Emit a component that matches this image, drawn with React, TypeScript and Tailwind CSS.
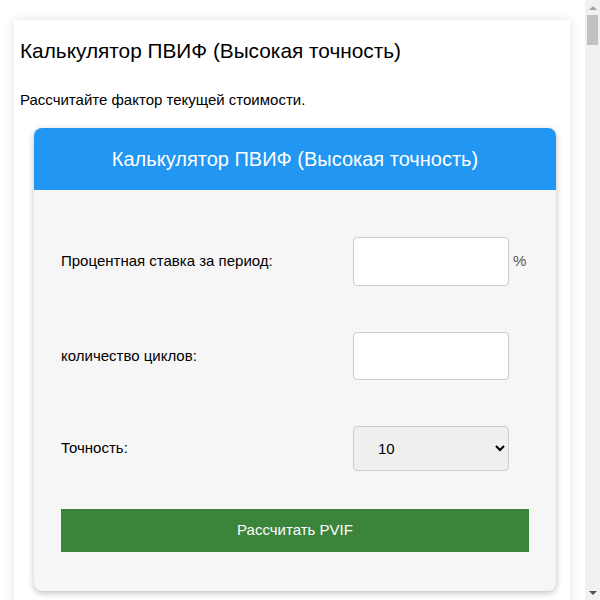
import { useState } from "react"

export default function App() {
  const [rate, setRate] = useState("")
  const [periods, setPeriods] = useState("")
  const [precision, setPrecision] = useState("10")

  return (
    <div className="flex h-screen overflow-hidden bg-white font-['Liberation_Sans',Arial,sans-serif] text-black">
      <div className="min-w-0 flex-1">
        <div className="ml-[14px] mt-[20px] w-[556px] bg-white px-[6px] pt-[19px] shadow-[0_0_10px_rgba(0,0,0,0.12)]">
          <h1 className="text-[20.8px] leading-[24px]">Калькулятор ПВИФ (Высокая точность)</h1>
          <p className="mt-[28px] text-[15px] leading-[17px]">Рассчитайте фактор текущей стоимости.</p>

          <div className="ml-[14px] mr-[8px] mt-[20px] overflow-hidden rounded-lg bg-[#f6f6f6] shadow-[0_2px_6px_rgba(0,0,0,0.25)]">
            <div className="flex h-[62px] items-center justify-center bg-[#2196f3] text-[20px] text-white">
              Калькулятор ПВИФ (Высокая точность)
            </div>

            <div className="px-[27px] pb-[39px] pt-[47px]">
              <div className="flex items-center">
                <label className="w-[292px] shrink-0 text-[15px]">Процентная ставка за период:</label>
                <input
                  value={rate}
                  onChange={(e) => setRate(e.target.value)}
                  className="h-[49px] w-[156px] shrink-0 rounded border border-[#cccccc] bg-white px-3 text-[15px] outline-none"
                />
                <span className="ml-[4px] text-[15px] text-[#555555]">%</span>
              </div>

              <div className="mt-[46px] flex items-center">
                <label className="w-[292px] shrink-0 text-[15px]">количество циклов:</label>
                <input
                  value={periods}
                  onChange={(e) => setPeriods(e.target.value)}
                  className="h-[48px] w-[156px] shrink-0 rounded border border-[#cccccc] bg-white px-3 text-[15px] outline-none"
                />
              </div>

              <div className="mt-[46px] flex items-center">
                <label className="w-[292px] shrink-0 text-[15px]">Точность:</label>
                <select
                  value={precision}
                  onChange={(e) => setPrecision(e.target.value)}
                  className="h-[45px] w-[156px] shrink-0 rounded border border-[#cccccc] bg-[#efefef] pl-[20px] pr-[4px] text-[15px] outline-none"
                >
                  <option value="2">2</option>
                  <option value="4">4</option>
                  <option value="6">6</option>
                  <option value="8">8</option>
                  <option value="10">10</option>
                  <option value="12">12</option>
                </select>
              </div>

              <button className="mt-[38px] h-[43px] w-full bg-[#3b843b] text-[15px] text-white">
                Рассчитать PVIF
              </button>
            </div>
          </div>

          <div className="h-[400px]" />
        </div>
      </div>

      {/* browser scrollbar as seen in the screenshot */}
      <div className="flex w-[15px] shrink-0 flex-col items-center bg-[#f1f1f1]">
        <div className="flex h-[15px] items-center justify-center">
          <div className="h-0 w-0 border-x-[4px] border-b-[4px] border-x-transparent border-b-[#a3a3a3]" />
        </div>
        <div className="h-[30px] w-[11px] bg-[#c1c1c1]" />
        <div className="flex-1" />
        <div className="flex h-[15px] items-center justify-center">
          <div className="h-0 w-0 border-x-[4px] border-t-[4px] border-x-transparent border-t-[#505050]" />
        </div>
      </div>
    </div>
  )
}
